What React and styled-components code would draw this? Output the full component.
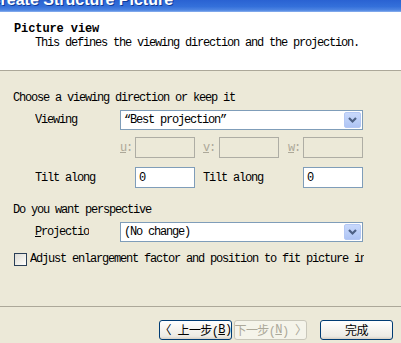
import React from 'react';
import styled, { createGlobalStyle } from 'styled-components';

const GlobalStyle = createGlobalStyle`
  html, body {
    margin: 0;
    padding: 0;
    background: #ece9d8;
  }
  body {
    font-family: "Liberation Mono", "Noto Sans CJK SC", monospace;
    font-size: 12px;
    letter-spacing: -1.2px;
    color: #000;
  }
  * {
    box-sizing: border-box;
  }
`;

const Window = styled.div`
  width: 401px;
  height: 343px;
  overflow: hidden;
  display: flex;
  flex-direction: column;
  background: #ece9d8;
`;

const TitleBar = styled.div`
  flex: none;
  height: 12px;
  overflow: hidden;
  background: linear-gradient(to bottom, #2a62d2 0%, #3470da 55%, #4f86e2 85%, #8fb2ee 100%);
`;

const TitleText = styled.div`
  margin: -8px 0 0 -11px;
  font: bold 16px/16px "Liberation Sans", Arial, sans-serif;
  letter-spacing: 0;
  color: #fff;
  white-space: nowrap;
  text-shadow: 1px 1px #0f3a98;
`;

const Header = styled.header`
  flex: none;
  height: 59px;
  padding: 10px 0 0 14px;
  background: #fff;
  border-bottom: 1px solid #aca899;
`;

const Heading = styled.div`
  font-weight: bold;
  line-height: 14px;
  letter-spacing: -0.1px;
`;

const Subtitle = styled.div`
  padding-left: 21px;
  line-height: 14px;
`;

const Body = styled.main`
  flex: none;
  height: 235px;
  padding: 20px 0 0 13px;
`;

const SectionTitle = styled.div`
  line-height: 14px;
  margin-top: ${p => p.$top || 0}px;
  white-space: nowrap;
`;

const Row = styled.div`
  display: flex;
  align-items: center;
  margin-top: ${p => p.$top}px;
  padding-left: ${p => p.$indent ?? 22}px;
`;

const Label = styled.div`
  flex: none;
  width: ${p => p.$width}px;
  margin-left: ${p => p.$gap || 0}px;
  line-height: 14px;
  white-space: nowrap;
  overflow: hidden;
`;

const AxisLabel = styled.div`
  flex: none;
  width: ${p => p.$width}px;
  margin-left: ${p => p.$gap || 0}px;
  color: #aca899;
  line-height: 14px;
`;

const Select = styled.div`
  flex: none;
  width: 243px;
  height: 20px;
  display: flex;
  align-items: center;
  padding-left: 3px;
  background: #fff;
  border: 1px solid #7f9db9;
`;

const SelectValue = styled.span`
  flex: 1;
  line-height: 14px;
  white-space: nowrap;
`;

const DropButton = styled.div`
  flex: none;
  width: 17px;
  height: 16px;
  margin: 1px;
  display: flex;
  align-items: center;
  justify-content: center;
  border-radius: 2px;
  background: linear-gradient(to bottom, #c8d8fb 0%, #b9cdf7 60%, #aec4f4 100%);
  border: 1px solid #b4c8f4;
`;

const TextBox = styled.div`
  flex: none;
  width: 60px;
  height: 21px;
  padding-left: 3px;
  display: flex;
  align-items: center;
  background: ${p => (p.$disabled ? '#ece9d8' : '#fff')};
  border: 1px solid ${p => (p.$disabled ? '#aeada4' : '#7f9db9')};
`;

const CheckBox = styled.div`
  flex: none;
  width: 13px;
  height: 13px;
  border: 1px solid #2a3f57;
  background: linear-gradient(135deg, #dcdbd5 0%, #f2f1ec 60%, #fff 100%);
`;

const Footer = styled.footer`
  flex: 1;
  display: flex;
  justify-content: flex-end;
  align-items: flex-start;
  padding: 13px 8px 0 0;
  border-top: 1px solid #aca899;
`;

const Button = styled.div`
  flex: none;
  width: 73px;
  height: 20px;
  margin-left: ${p => p.$gap || 0}px;
  display: flex;
  align-items: center;
  justify-content: center;
  border-radius: 3px;
  font-size: 12px;
  letter-spacing: -0.6px;
  white-space: nowrap;
  color: ${p => (p.$disabled ? '#aca899' : '#000')};
  border: 1px solid ${p => (p.$disabled ? '#c9c7ba' : '#003c74')};
  background: ${p =>
    p.$disabled
      ? '#f5f4ea'
      : 'linear-gradient(to bottom, #ffffff 0%, #f4f3ee 50%, #ecebe5 85%, #d6d0c5 100%)'};
`;

const Chevron = () => (
  <svg width="11" height="8" viewBox="0 0 11 8">
    <path d="M2 2 L5.5 5.5 L9 2" fill="none" stroke="#4d6185" strokeWidth="2.2" />
  </svg>
);

const Combo = ({ children }) => (
  <Select>
    <SelectValue>{children}</SelectValue>
    <DropButton>
      <Chevron />
    </DropButton>
  </Select>
);

export default function App() {
  return (
    <>
      <GlobalStyle />
      <Window>
        <TitleBar>
          <TitleText>Create Structure Picture</TitleText>
        </TitleBar>
        <Header>
          <Heading>Picture view</Heading>
          <Subtitle>This defines the viewing direction and the projection.</Subtitle>
        </Header>
        <Body>
          <SectionTitle>Choose a viewing direction or keep it</SectionTitle>
          <Row $top={5}>
            <Label $width={85}>Viewing</Label>
            <Combo>“Best projection”</Combo>
          </Row>
          <Row $top={7} $indent={120 - 13}>
            <AxisLabel $width={15}><u>u</u>:</AxisLabel>
            <TextBox $disabled />
            <AxisLabel $width={16} $gap={8}><u>v</u>:</AxisLabel>
            <TextBox $disabled />
            <AxisLabel $width={15} $gap={9}><u>w</u>:</AxisLabel>
            <TextBox $disabled />
          </Row>
          <Row $top={9}>
            <Label $width={100}>Tilt along</Label>
            <TextBox>0</TextBox>
            <Label $width={100} $gap={8}>Tilt along</Label>
            <TextBox>0</TextBox>
          </Row>
          <SectionTitle $top={15}>Do you want perspective</SectionTitle>
          <Row $top={5}>
            <Label $width={85}>
              <Label $width={54}><u>P</u>rojection</Label>
            </Label>
            <Combo>(No change)</Combo>
          </Row>
          <Row $top={10} $indent={1}>
            <CheckBox />
            <Label $width={334} $gap={3}>
              Adjust enlargement factor and position to fit picture in
            </Label>
          </Row>
        </Body>
        <Footer>
          <Button>〈 上一步(<u>B</u>)</Button>
          <Button $disabled $gap={2}>下一步(<u>N</u>) 〉</Button>
          <Button $gap={13}>完成</Button>
        </Footer>
      </Window>
    </>
  );
}
